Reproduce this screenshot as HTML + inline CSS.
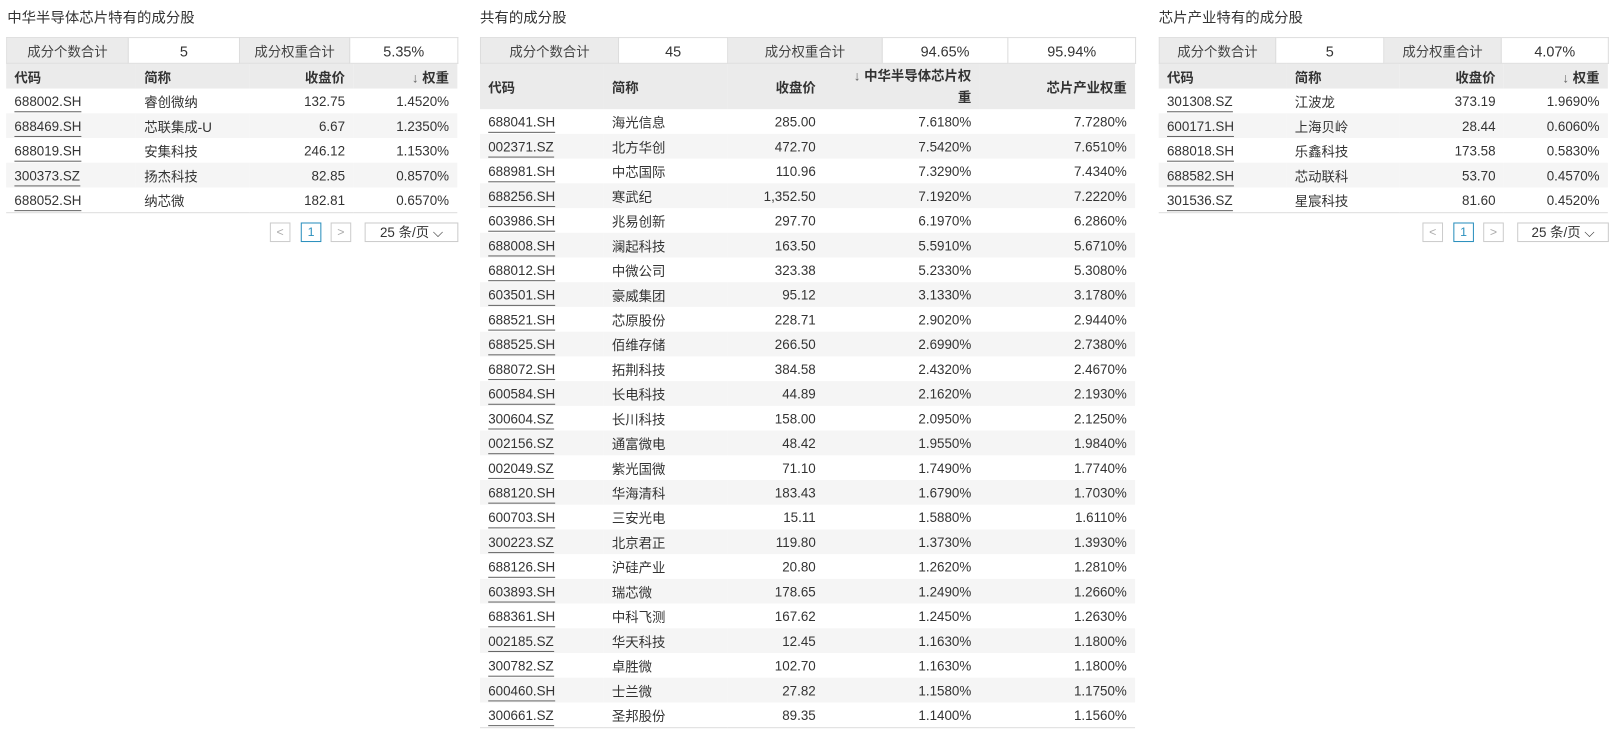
<!DOCTYPE html><html><head><meta charset="utf-8"><style>
body{margin:0;width:1615px;height:732px;background:#fff;font-family:"Liberation Sans","Noto Sans CJK SC",sans-serif;font-size:13px;color:#333;position:relative;overflow:hidden}
#w{position:absolute;left:0;top:0;width:1568px;height:711px;transform:scale(1.03);transform-origin:0 0}
.t{position:absolute;top:7px;font-size:14px;color:#333}
.p{position:absolute;top:36px}
table{border-collapse:collapse;table-layout:fixed}
.s td{height:22px;border:1px solid #ddd;text-align:center;padding:0;font-size:13px}
.s td.g{background:#ebebeb;color:#444}
.s td.v{font-size:14px;padding-top:2px}
.d th{background:#ebebeb;font-weight:bold;height:24px;padding:0 8px;text-align:left;color:#333}
.d td{height:24px;padding:0 8px;white-space:nowrap}
.d tr:nth-child(even) td{background:#f5f5f5}
.d .r{text-align:right}
.d a{color:#333;text-decoration:none;border-bottom:1px solid #666;padding-bottom:2px}
.d tbody tr:last-child td{border-bottom:1px solid #ddd}
.pg{position:absolute;top:216px;height:18px}
.pg span{position:absolute;top:0;height:17px;border:1px solid #ccc;color:#aaa;text-align:center;line-height:17px;font-size:12px}
.pg .c{border-color:#2a8fbd;color:#2a8fbd}
</style></head><body><div id="w">
<div class="t" style="left:7px">中华半导体芯片特有的成分股</div>
<div class="t" style="left:466px">共有的成分股</div>
<div class="t" style="left:1125px">芯片产业特有的成分股</div>

<div class="p" style="left:6px">
<table class="s" style="width:438px"><col style="width:118px"><col style="width:108px"><col style="width:107px"><col style="width:105px"><tr><td class="g">成分个数合计</td><td class="v">5</td><td class="g">成分权重合计</td><td class="v">5.35%</td></tr></table>
<table class="d" style="width:438px"><col style="width:126px"><col style="width:110px"><col style="width:101px"><col style="width:101px">
<thead><tr><th>代码</th><th>简称</th><th class="r">收盘价</th><th class="r"><span style="font-weight:normal;color:#666">↓</span> 权重</th></tr></thead><tbody>
<tr><td><a>688002.SH</a></td><td>睿创微纳</td><td class="r">132.75</td><td class="r">1.4520%</td></tr>
<tr><td><a>688469.SH</a></td><td>芯联集成-U</td><td class="r">6.67</td><td class="r">1.2350%</td></tr>
<tr><td><a>688019.SH</a></td><td>安集科技</td><td class="r">246.12</td><td class="r">1.1530%</td></tr>
<tr><td><a>300373.SZ</a></td><td>扬杰科技</td><td class="r">82.85</td><td class="r">0.8570%</td></tr>
<tr><td><a>688052.SH</a></td><td>纳芯微</td><td class="r">182.81</td><td class="r">0.6570%</td></tr>
</tbody></table></div>
<div class="pg" style="left:262px"><span style="left:0;width:18px">&lt;</span><span class="c" style="left:30px;width:18px">1</span><span style="left:59px;width:18px">&gt;</span><span style="left:92px;width:89px;color:#333;font-size:13px">25 条/页 ⌵</span></div>

<div class="p" style="left:466px">
<table class="s" style="width:636px"><col style="width:134px"><col style="width:106px"><col style="width:150px"><col style="width:122px"><col style="width:124px"><tr><td class="g">成分个数合计</td><td class="v">45</td><td class="g">成分权重合计</td><td class="v">94.65%</td><td class="v">95.94%</td></tr></table>
<table class="d" style="width:636px"><col style="width:120px"><col style="width:120px"><col style="width:94px"><col style="width:151px"><col style="width:151px">
<thead><tr><th style="height:44px">代码</th><th>简称</th><th class="r">收盘价</th><th class="r" style="line-height:21px"><span style="font-weight:normal;color:#666">↓</span> 中华半导体芯片权<br>重</th><th class="r">芯片产业权重</th></tr></thead><tbody>
<tr><td><a>688041.SH</a></td><td>海光信息</td><td class="r">285.00</td><td class="r">7.6180%</td><td class="r">7.7280%</td></tr>
<tr><td><a>002371.SZ</a></td><td>北方华创</td><td class="r">472.70</td><td class="r">7.5420%</td><td class="r">7.6510%</td></tr>
<tr><td><a>688981.SH</a></td><td>中芯国际</td><td class="r">110.96</td><td class="r">7.3290%</td><td class="r">7.4340%</td></tr>
<tr><td><a>688256.SH</a></td><td>寒武纪</td><td class="r">1,352.50</td><td class="r">7.1920%</td><td class="r">7.2220%</td></tr>
<tr><td><a>603986.SH</a></td><td>兆易创新</td><td class="r">297.70</td><td class="r">6.1970%</td><td class="r">6.2860%</td></tr>
<tr><td><a>688008.SH</a></td><td>澜起科技</td><td class="r">163.50</td><td class="r">5.5910%</td><td class="r">5.6710%</td></tr>
<tr><td><a>688012.SH</a></td><td>中微公司</td><td class="r">323.38</td><td class="r">5.2330%</td><td class="r">5.3080%</td></tr>
<tr><td><a>603501.SH</a></td><td>豪威集团</td><td class="r">95.12</td><td class="r">3.1330%</td><td class="r">3.1780%</td></tr>
<tr><td><a>688521.SH</a></td><td>芯原股份</td><td class="r">228.71</td><td class="r">2.9020%</td><td class="r">2.9440%</td></tr>
<tr><td><a>688525.SH</a></td><td>佰维存储</td><td class="r">266.50</td><td class="r">2.6990%</td><td class="r">2.7380%</td></tr>
<tr><td><a>688072.SH</a></td><td>拓荆科技</td><td class="r">384.58</td><td class="r">2.4320%</td><td class="r">2.4670%</td></tr>
<tr><td><a>600584.SH</a></td><td>长电科技</td><td class="r">44.89</td><td class="r">2.1620%</td><td class="r">2.1930%</td></tr>
<tr><td><a>300604.SZ</a></td><td>长川科技</td><td class="r">158.00</td><td class="r">2.0950%</td><td class="r">2.1250%</td></tr>
<tr><td><a>002156.SZ</a></td><td>通富微电</td><td class="r">48.42</td><td class="r">1.9550%</td><td class="r">1.9840%</td></tr>
<tr><td><a>002049.SZ</a></td><td>紫光国微</td><td class="r">71.10</td><td class="r">1.7490%</td><td class="r">1.7740%</td></tr>
<tr><td><a>688120.SH</a></td><td>华海清科</td><td class="r">183.43</td><td class="r">1.6790%</td><td class="r">1.7030%</td></tr>
<tr><td><a>600703.SH</a></td><td>三安光电</td><td class="r">15.11</td><td class="r">1.5880%</td><td class="r">1.6110%</td></tr>
<tr><td><a>300223.SZ</a></td><td>北京君正</td><td class="r">119.80</td><td class="r">1.3730%</td><td class="r">1.3930%</td></tr>
<tr><td><a>688126.SH</a></td><td>沪硅产业</td><td class="r">20.80</td><td class="r">1.2620%</td><td class="r">1.2810%</td></tr>
<tr><td><a>603893.SH</a></td><td>瑞芯微</td><td class="r">178.65</td><td class="r">1.2490%</td><td class="r">1.2660%</td></tr>
<tr><td><a>688361.SH</a></td><td>中科飞测</td><td class="r">167.62</td><td class="r">1.2450%</td><td class="r">1.2630%</td></tr>
<tr><td><a>002185.SZ</a></td><td>华天科技</td><td class="r">12.45</td><td class="r">1.1630%</td><td class="r">1.1800%</td></tr>
<tr><td><a>300782.SZ</a></td><td>卓胜微</td><td class="r">102.70</td><td class="r">1.1630%</td><td class="r">1.1800%</td></tr>
<tr><td><a>600460.SH</a></td><td>士兰微</td><td class="r">27.82</td><td class="r">1.1580%</td><td class="r">1.1750%</td></tr>
<tr><td><a>300661.SZ</a></td><td>圣邦股份</td><td class="r">89.35</td><td class="r">1.1400%</td><td class="r">1.1560%</td></tr>
</tbody></table></div>

<div class="p" style="left:1125px">
<table class="s" style="width:436px"><col style="width:113px"><col style="width:105px"><col style="width:114px"><col style="width:104px"><tr><td class="g">成分个数合计</td><td class="v">5</td><td class="g">成分权重合计</td><td class="v">4.07%</td></tr></table>
<table class="d" style="width:436px"><col style="width:124px"><col style="width:110px"><col style="width:101px"><col style="width:101px">
<thead><tr><th>代码</th><th>简称</th><th class="r">收盘价</th><th class="r"><span style="font-weight:normal;color:#666">↓</span> 权重</th></tr></thead><tbody>
<tr><td><a>301308.SZ</a></td><td>江波龙</td><td class="r">373.19</td><td class="r">1.9690%</td></tr>
<tr><td><a>600171.SH</a></td><td>上海贝岭</td><td class="r">28.44</td><td class="r">0.6060%</td></tr>
<tr><td><a>688018.SH</a></td><td>乐鑫科技</td><td class="r">173.58</td><td class="r">0.5830%</td></tr>
<tr><td><a>688582.SH</a></td><td>芯动联科</td><td class="r">53.70</td><td class="r">0.4570%</td></tr>
<tr><td><a>301536.SZ</a></td><td>星宸科技</td><td class="r">81.60</td><td class="r">0.4520%</td></tr>
</tbody></table></div>
<div class="pg" style="left:1381px"><span style="left:0;width:18px">&lt;</span><span class="c" style="left:30px;width:18px">1</span><span style="left:59px;width:18px">&gt;</span><span style="left:92px;width:87px;color:#333;font-size:13px">25 条/页 ⌵</span></div>
</div></body></html>
